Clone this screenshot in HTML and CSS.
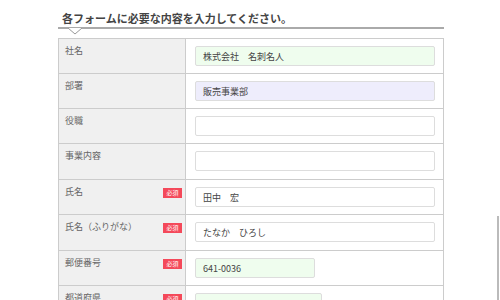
FILE: index.html
```html
<!DOCTYPE html>
<html lang="ja">

<head>
    <meta charset="UTF-8" />
    <meta name="viewport" content="width=device-width, initial-scale=1.0" />
    <title>お問い合わせフォーム</title>
    <link rel="stylesheet" href="styles.css">
</head>

<body>
    <div class="form-wrap">
        <h2 class="form-title">各フォームに必要な内容を入力してください。</h2>
        <svg class="title-notch" width="14" height="7" viewBox="0 0 14 7">
            <polyline points="0,0 7,6 14,0" fill="#fff" stroke="#999" stroke-width="1" />
        </svg>

        <div class="form-table">
            <div class="row">
                <div class="label">社名</div>
                <div class="field"><input class="input fill-green" type="text" value="株式会社　名刺名人"></div>
            </div>
            <div class="row">
                <div class="label">部署</div>
                <div class="field"><input class="input fill-purple" type="text" value="販売事業部"></div>
            </div>
            <div class="row">
                <div class="label">役職</div>
                <div class="field"><input class="input" type="text"></div>
            </div>
            <div class="row tall">
                <div class="label">事業内容</div>
                <div class="field"><input class="input" type="text"></div>
            </div>
            <div class="row">
                <div class="label">氏名<span class="required">必須</span></div>
                <div class="field"><input class="input" type="text" value="田中　宏"></div>
            </div>
            <div class="row tall">
                <div class="label">氏名（ふりがな）<span class="required">必須</span></div>
                <div class="field"><input class="input" type="text" value="たなか　ひろし"></div>
            </div>
            <div class="row">
                <div class="label">郵便番号<span class="required">必須</span></div>
                <div class="field"><input class="input fill-green short" type="text" value="641-0036"></div>
            </div>
            <div class="row">
                <div class="label">都道府県<span class="required">必須</span></div>
                <div class="field"><input class="input fill-green medium" type="text"></div>
            </div>
        </div>
    </div>
    <div class="scroll-thumb"></div>
</body>

</html>
```

FILE: styles.css
```css
body {
    margin: 0;
    font-family: "Noto Sans CJK JP", "Noto Sans", sans-serif;
    color: #555;
    background: #fff;
    height: 300px;
    overflow: hidden;
}

.form-wrap {
    width: 386px;
    margin-left: 58px;
    padding-top: 10px;
}

.form-title {
    margin: 0;
    padding: 0 0 1px 4px;
    font-size: 11px;
    line-height: 16px;
    font-weight: bold;
    color: #444;
    border-bottom: 2px solid #aaa;
}

.title-notch {
    display: block;
    margin: -1px 0 0 10px;
}

.form-table {
    margin-top: 3px;
    border: 1px solid #ccc;
    border-bottom: none;
}

.row {
    display: grid;
    grid-template-columns: 127px 1fr;
    border-bottom: 1px solid #ccc;
}

.label {
    display: flex;
    justify-content: space-between;
    align-items: flex-start;
    background: #f0f0f0;
    border-right: 1px solid #ccc;
    padding: 5px 3px 0 6px;
    font-size: 9px;
    line-height: 14px;
    color: #666;
}

.required {
    margin-top: 3px;
    width: 19px;
    height: 10px;
    background: #f4495a;
    color: #fff;
    font-size: 6px;
    line-height: 10px;
    text-align: center;
}

.field {
    padding: 7px 7px 7px 9px;
}

.tall .field {
    padding-bottom: 8px;
}

.input {
    display: block;
    box-sizing: border-box;
    width: 240px;
    height: 20px;
    margin: 0;
    padding: 0 7px;
    border: 1px solid #ddd;
    border-radius: 2px;
    background: #fff;
    font-family: inherit;
    font-size: 9px;
    color: #444;
}

.fill-green {
    background: #effdee;
}

.fill-purple {
    background: #eeedfc;
}

.short {
    width: 120px;
}

.medium {
    width: 127px;
}

.scroll-thumb {
    position: absolute;
    left: 497px;
    top: 216px;
    width: 2px;
    height: 90px;
    background: #bbb;
}
```
